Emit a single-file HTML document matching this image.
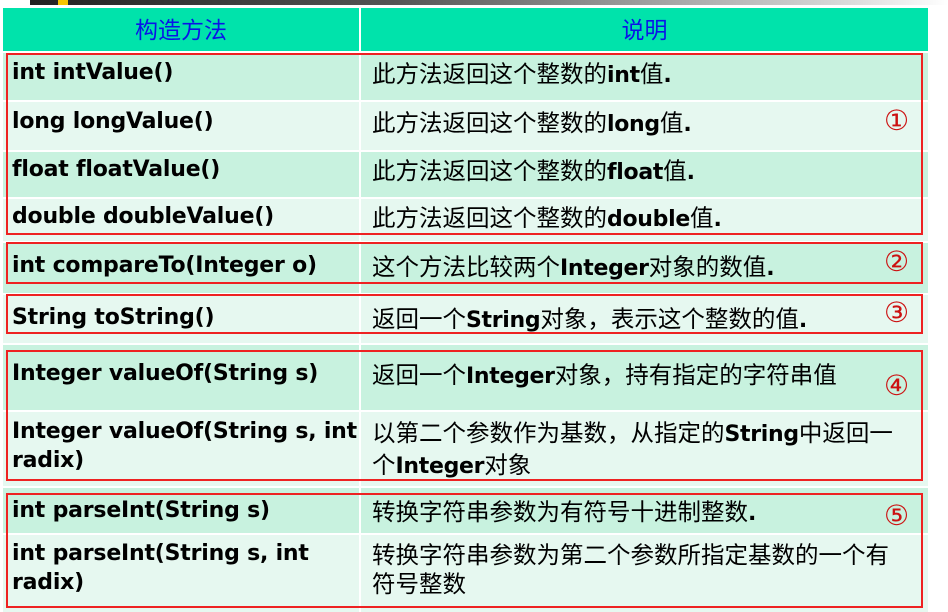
<!DOCTYPE html>
<html><head><meta charset="utf-8"><style>
*{margin:0;padding:0;box-sizing:border-box}
body{width:948px;height:612px;background:#fff;position:relative;overflow:hidden;font-family:"DejaVu Sans","Noto Sans CJK SC",sans-serif}
.bar{position:absolute;left:30px;top:0;width:918px;height:5px;background:linear-gradient(90deg,#222,#555 40%,#ddd 90%,#fff)}
.yel{position:absolute;left:58px;top:0;width:10px;height:5px;background:#f5c400}
.c{position:absolute;font-weight:bold;font-size:22px;line-height:29px;color:#000;letter-spacing:-0.2px}
.d{position:absolute;font-size:23.5px;line-height:29px;color:#000;font-family:"Noto Sans CJK SC",sans-serif}
.d b{font-family:"DejaVu Sans",sans-serif;font-size:22px;letter-spacing:-0.3px}
.bg{position:absolute}
.h{background:#00e3ab;color:#0a14e8;font-size:23px;text-align:center;line-height:40px;font-family:"Noto Sans CJK SC",sans-serif}
.r{position:absolute;border:2px solid #ee2222}
.n{position:absolute;left:884px;color:#cc1111;font-size:28px;font-family:"DejaVu Sans",sans-serif}
</style></head><body>
<div class="bar"></div><div class="yel"></div>
<div class="bg h" style="left:3px;top:8px;width:356px;height:43px">构造方法</div>
<div class="bg h" style="left:361px;top:8px;width:567px;height:43px">说明</div>

<div class="bg" style="left:3px;top:53px;width:356px;height:47px;background:#c8f2df"></div><div class="bg" style="left:361px;top:53px;width:567px;height:47px;background:#c8f2df"></div>
<div class="bg" style="left:3px;top:102px;width:356px;height:48px;background:#e6f8f0"></div><div class="bg" style="left:361px;top:102px;width:567px;height:48px;background:#e6f8f0"></div>
<div class="bg" style="left:3px;top:152px;width:356px;height:45px;background:#c8f2df"></div><div class="bg" style="left:361px;top:152px;width:567px;height:45px;background:#c8f2df"></div>
<div class="bg" style="left:3px;top:199px;width:356px;height:42px;background:#e6f8f0"></div><div class="bg" style="left:361px;top:199px;width:567px;height:42px;background:#e6f8f0"></div>
<div class="bg" style="left:3px;top:243px;width:356px;height:50px;background:#c8f2df"></div><div class="bg" style="left:361px;top:243px;width:567px;height:50px;background:#c8f2df"></div>
<div class="bg" style="left:3px;top:295px;width:356px;height:48px;background:#e6f8f0"></div><div class="bg" style="left:361px;top:295px;width:567px;height:48px;background:#e6f8f0"></div>
<div class="bg" style="left:3px;top:345px;width:356px;height:65px;background:#c8f2df"></div><div class="bg" style="left:361px;top:345px;width:567px;height:65px;background:#c8f2df"></div>
<div class="bg" style="left:3px;top:412px;width:356px;height:74px;background:#e6f8f0"></div><div class="bg" style="left:361px;top:412px;width:567px;height:74px;background:#e6f8f0"></div>
<div class="bg" style="left:3px;top:488px;width:356px;height:45px;background:#c8f2df"></div><div class="bg" style="left:361px;top:488px;width:567px;height:45px;background:#c8f2df"></div>
<div class="bg" style="left:3px;top:535px;width:356px;height:77px;background:#e6f8f0"></div><div class="bg" style="left:361px;top:535px;width:567px;height:77px;background:#e6f8f0"></div>

<div class="c" style="left:12px;top:58px">int intValue()</div><div class="d" style="left:372px;top:58px">此方法返回这个整数的<b>int</b>值<b>.</b></div>
<div class="c" style="left:12px;top:107px">long longValue()</div><div class="d" style="left:372px;top:107px">此方法返回这个整数的<b>long</b>值<b>.</b></div>
<div class="c" style="left:12px;top:155px">float floatValue()</div><div class="d" style="left:372px;top:155px">此方法返回这个整数的<b>float</b>值<b>.</b></div>
<div class="c" style="left:12px;top:202px">double doubleValue()</div><div class="d" style="left:372px;top:202px">此方法返回这个整数的<b>double</b>值<b>.</b></div>
<div class="c" style="left:12px;top:251px">int compareTo(Integer o)</div><div class="d" style="left:372px;top:251px">这个方法比较两个<b>Integer</b>对象的数值<b>.</b></div>
<div class="c" style="left:12px;top:303px">String toString()</div><div class="d" style="left:372px;top:303px">返回一个<b>String</b>对象，表示这个整数的值<b>.</b></div>
<div class="c" style="left:12px;top:359px">Integer valueOf(String s)</div><div class="d" style="left:372px;top:359px">返回一个<b>Integer</b>对象，持有指定的字符串值</div>
<div class="c" style="left:12px;top:417px;width:345px">Integer valueOf(String s, int radix)</div><div class="d" style="left:372px;top:417px;width:525px">以第二个参数作为基数，从指定的<b>String</b>中返回一个<b>Integer</b>对象</div>
<div class="c" style="left:12px;top:496px">int parseInt(String s)</div><div class="d" style="left:372px;top:496px">转换字符串参数为有符号十进制整数<b>.</b></div>
<div class="c" style="left:12px;top:539px;width:345px">int parseInt(String s, int radix)</div><div class="d" style="left:372px;top:539px;width:525px">转换字符串参数为第二个参数所指定基数的一个有符号整数</div>

<div class="r" style="left:6px;top:53px;width:917px;height:182px"></div>
<div class="r" style="left:6px;top:242px;width:917px;height:42px"></div>
<div class="r" style="left:6px;top:294px;width:917px;height:40px"></div>
<div class="r" style="left:6px;top:350px;width:917px;height:131px"></div>
<div class="r" style="left:6px;top:493px;width:917px;height:115px"></div>

<div class="n" style="top:104px">①</div>
<div class="n" style="top:245px">②</div>
<div class="n" style="top:296px">③</div>
<div class="n" style="top:369px">④</div>
<div class="n" style="top:499px">⑤</div>
</body></html>
